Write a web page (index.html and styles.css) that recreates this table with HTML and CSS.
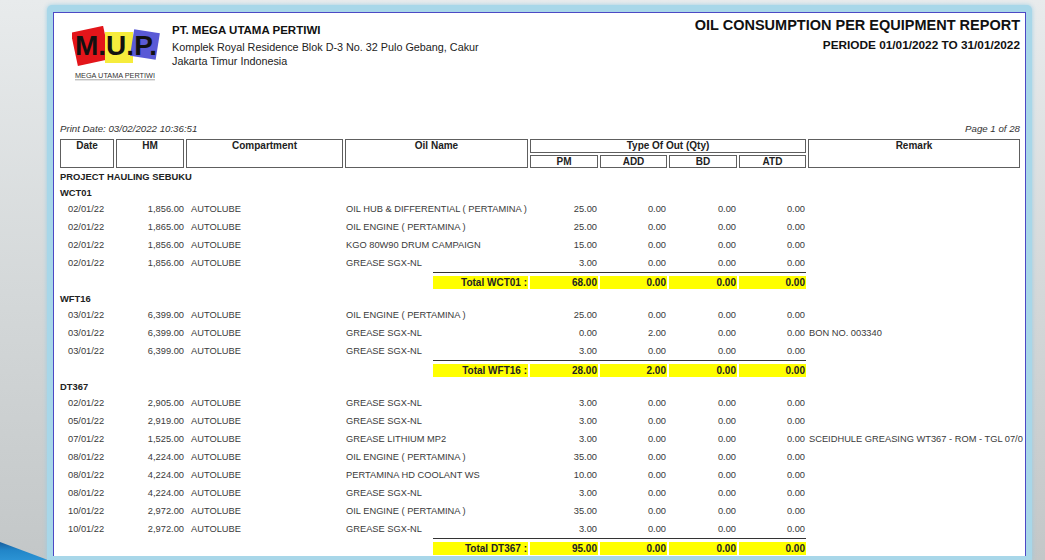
FILE: index.html
```html
<!DOCTYPE html>
<html>
<head>
<meta charset="utf-8">
<title>Oil Consumption Per Equipment Report</title>
<link rel="stylesheet" href="styles.css">
</head>
<body>
<svg class="corner" width="50" height="20" viewBox="0 0 50 20">
  <defs>
    <linearGradient id="cg" x1="0" y1="0" x2="0" y2="1">
      <stop offset="0" stop-color="#1a5f9e"/>
      <stop offset="0.45" stop-color="#2185c8"/>
      <stop offset="1" stop-color="#2b93d4"/>
    </linearGradient>
  </defs>
  <polygon points="0,2 48,20 0,20" fill="url(#cg)"/>
</svg>
<div class="page">
  <div class="frame">
    <div class="sheet">
      <header class="head">
        <div class="logo">
          <svg width="90" height="60" viewBox="0 0 90 60">
            <rect x="2" y="3" width="33" height="34" fill="#e3151a" transform="rotate(-12 18 20)"/>
            <rect x="33" y="6" width="28" height="31" fill="#f6ec3c"/>
            <rect x="60" y="5" width="26" height="27" fill="#5a5ad6" transform="rotate(9 73 18)"/>
            <text x="3" y="29" font-family="Liberation Sans, Arial, sans-serif" font-weight="bold" font-size="27" textLength="82" lengthAdjust="spacingAndGlyphs" fill="#111">M.U.P.</text>
            <text x="3" y="52" font-family="Liberation Sans, Arial, sans-serif" font-size="6.4" textLength="80" lengthAdjust="spacingAndGlyphs" fill="#333">MEGA UTAMA PERTIWI</text>
            <line x1="3" y1="53.8" x2="83" y2="53.8" stroke="#666" stroke-width="0.6"/>
          </svg>
        </div>
        <div class="company">
          <div class="name">PT. MEGA UTAMA PERTIWI</div>
          <div class="addr">Komplek Royal Residence Blok D-3 No. 32 Pulo Gebang, Cakur<br>Jakarta Timur Indonesia</div>
        </div>
        <div class="title-block">
          <div class="title">OIL CONSUMPTION PER EQUIPMENT REPORT</div>
          <div class="period">PERIODE 01/01/2022 TO 31/01/2022</div>
        </div>
      </header>

      <div class="meta">
        <span>Print Date: 03/02/2022 10:36:51</span>
        <span>Page 1 of 28</span>
      </div>

      <div class="thead">
        <div class="th span2">Date</div>
        <div class="th span2">HM</div>
        <div class="th span2">Compartment</div>
        <div class="th span2">Oil Name</div>
        <div class="th type-out">Type Of Out (Qty)</div>
        <div class="th span2 remark-h">Remark</div>
        <div class="th sub">PM</div>
        <div class="th sub">ADD</div>
        <div class="th sub">BD</div>
        <div class="th sub">ATD</div>
      </div>

      <div class="group">PROJECT HAULING SEBUKU</div>

      <div class="group">WCT01</div>
      <div class="row"><span class="c-date">02/01/22</span><span class="c-hm">1,856.00</span><span class="c-comp">AUTOLUBE</span><span class="c-oil">OIL HUB &amp; DIFFERENTIAL ( PERTAMINA )</span><span class="num">25.00</span><span class="num">0.00</span><span class="num">0.00</span><span class="num">0.00</span><span class="c-rem"></span></div>
      <div class="row"><span class="c-date">02/01/22</span><span class="c-hm">1,865.00</span><span class="c-comp">AUTOLUBE</span><span class="c-oil">OIL ENGINE ( PERTAMINA )</span><span class="num">25.00</span><span class="num">0.00</span><span class="num">0.00</span><span class="num">0.00</span><span class="c-rem"></span></div>
      <div class="row"><span class="c-date">02/01/22</span><span class="c-hm">1,856.00</span><span class="c-comp">AUTOLUBE</span><span class="c-oil">KGO 80W90 DRUM CAMPAIGN</span><span class="num">15.00</span><span class="num">0.00</span><span class="num">0.00</span><span class="num">0.00</span><span class="c-rem"></span></div>
      <div class="row"><span class="c-date">02/01/22</span><span class="c-hm">1,856.00</span><span class="c-comp">AUTOLUBE</span><span class="c-oil">GREASE SGX-NL</span><span class="num">3.00</span><span class="num">0.00</span><span class="num">0.00</span><span class="num">0.00</span><span class="c-rem"></span></div>
      <div class="total-row">
        <div class="total-wrap">
          <span class="y">Total WCT01 :</span><span class="y">68.00</span><span class="y">0.00</span><span class="y">0.00</span><span class="y">0.00</span>
        </div>
      </div>

      <div class="group">WFT16</div>
      <div class="row"><span class="c-date">03/01/22</span><span class="c-hm">6,399.00</span><span class="c-comp">AUTOLUBE</span><span class="c-oil">OIL ENGINE ( PERTAMINA )</span><span class="num">25.00</span><span class="num">0.00</span><span class="num">0.00</span><span class="num">0.00</span><span class="c-rem"></span></div>
      <div class="row"><span class="c-date">03/01/22</span><span class="c-hm">6,399.00</span><span class="c-comp">AUTOLUBE</span><span class="c-oil">GREASE SGX-NL</span><span class="num">0.00</span><span class="num">2.00</span><span class="num">0.00</span><span class="num">0.00</span><span class="c-rem">BON NO. 003340</span></div>
      <div class="row"><span class="c-date">03/01/22</span><span class="c-hm">6,399.00</span><span class="c-comp">AUTOLUBE</span><span class="c-oil">GREASE SGX-NL</span><span class="num">3.00</span><span class="num">0.00</span><span class="num">0.00</span><span class="num">0.00</span><span class="c-rem"></span></div>
      <div class="total-row">
        <div class="total-wrap">
          <span class="y">Total WFT16 :</span><span class="y">28.00</span><span class="y">2.00</span><span class="y">0.00</span><span class="y">0.00</span>
        </div>
      </div>

      <div class="group">DT367</div>
      <div class="row"><span class="c-date">02/01/22</span><span class="c-hm">2,905.00</span><span class="c-comp">AUTOLUBE</span><span class="c-oil">GREASE SGX-NL</span><span class="num">3.00</span><span class="num">0.00</span><span class="num">0.00</span><span class="num">0.00</span><span class="c-rem"></span></div>
      <div class="row"><span class="c-date">05/01/22</span><span class="c-hm">2,919.00</span><span class="c-comp">AUTOLUBE</span><span class="c-oil">GREASE SGX-NL</span><span class="num">3.00</span><span class="num">0.00</span><span class="num">0.00</span><span class="num">0.00</span><span class="c-rem"></span></div>
      <div class="row"><span class="c-date">07/01/22</span><span class="c-hm">1,525.00</span><span class="c-comp">AUTOLUBE</span><span class="c-oil">GREASE LITHIUM MP2</span><span class="num">3.00</span><span class="num">0.00</span><span class="num">0.00</span><span class="num">0.00</span><span class="c-rem">SCEIDHULE GREASING WT367 - ROM - TGL 07/0</span></div>
      <div class="row"><span class="c-date">08/01/22</span><span class="c-hm">4,224.00</span><span class="c-comp">AUTOLUBE</span><span class="c-oil">OIL ENGINE ( PERTAMINA )</span><span class="num">35.00</span><span class="num">0.00</span><span class="num">0.00</span><span class="num">0.00</span><span class="c-rem"></span></div>
      <div class="row"><span class="c-date">08/01/22</span><span class="c-hm">4,224.00</span><span class="c-comp">AUTOLUBE</span><span class="c-oil">PERTAMINA HD COOLANT WS</span><span class="num">10.00</span><span class="num">0.00</span><span class="num">0.00</span><span class="num">0.00</span><span class="c-rem"></span></div>
      <div class="row"><span class="c-date">08/01/22</span><span class="c-hm">4,224.00</span><span class="c-comp">AUTOLUBE</span><span class="c-oil">GREASE SGX-NL</span><span class="num">3.00</span><span class="num">0.00</span><span class="num">0.00</span><span class="num">0.00</span><span class="c-rem"></span></div>
      <div class="row"><span class="c-date">10/01/22</span><span class="c-hm">2,972.00</span><span class="c-comp">AUTOLUBE</span><span class="c-oil">OIL ENGINE ( PERTAMINA )</span><span class="num">35.00</span><span class="num">0.00</span><span class="num">0.00</span><span class="num">0.00</span><span class="c-rem"></span></div>
      <div class="row"><span class="c-date">10/01/22</span><span class="c-hm">2,972.00</span><span class="c-comp">AUTOLUBE</span><span class="c-oil">GREASE SGX-NL</span><span class="num">3.00</span><span class="num">0.00</span><span class="num">0.00</span><span class="num">0.00</span><span class="c-rem"></span></div>
      <div class="total-row">
        <div class="total-wrap">
          <span class="y">Total DT367 :</span><span class="y">95.00</span><span class="y">0.00</span><span class="y">0.00</span><span class="y">0.00</span>
        </div>
      </div>
    </div>
  </div>
</div>
</body>
</html>
```

FILE: styles.css
```css
html, body {
  margin: 0;
  height: 560px;
  overflow: hidden;
}

body {
  position: relative;
  background: linear-gradient(180deg, #e8ebec 0%, #d3d7d8 55%, #c3c7c8 100%);
  font-family: "Liberation Sans", Arial, sans-serif;
  color: #333;
}

.corner {
  position: absolute;
  left: 0;
  bottom: 0;
  display: block;
}

.page {
  padding: 5px 0 0 47px;
}

.frame {
  position: relative;
  width: 985px;
  height: 555px;
  box-sizing: border-box;
  padding: 7px 6px 0 6px;
  background: #a8d7e9;
  border-radius: 5px 5px 0 0;
  box-shadow: 0 0 4px rgba(150, 205, 228, 0.9);
}

.sheet {
  height: 544px;
  box-sizing: border-box;
  background: #fff;
  border: 1px solid #4d49c4;
  border-bottom: none;
  padding: 0 5px 0 6px;
  overflow: hidden;
}

/* ---------- report header ---------- */
.head {
  display: flex;
  height: 110px;
}

.logo {
  margin: 13px 0 0 12px;
  width: 90px;
  height: 60px;
}

.logo svg {
  display: block;
}

.company {
  margin: 10px 0 0 10px;
  color: #1a1a1a;
}

.company .name {
  font-weight: bold;
  font-size: 11.5px;
  line-height: 14px;
  color: #111;
}

.company .addr {
  margin-top: 3px;
  font-size: 10.8px;
  line-height: 14px;
  color: #222;
}

.title-block {
  margin-left: auto;
  padding-top: 4px;
  text-align: right;
  color: #111;
}

.title {
  font-weight: bold;
  font-size: 14.5px;
  line-height: 16px;
}

.period {
  margin-top: 5px;
  font-weight: bold;
  font-size: 11.8px;
  line-height: 14px;
}

/* ---------- meta line ---------- */
.meta {
  display: flex;
  justify-content: space-between;
  font-style: italic;
  font-size: 9.7px;
  line-height: 12px;
  margin-bottom: 4px;
  color: #333;
}

/* ---------- table header ---------- */
.thead {
  display: grid;
  grid-template-columns: 54px 68px 157px 183px 68px 67px 68px 67px 212px;
  grid-template-rows: 14px 13px;
  gap: 2px;
}

.th {
  box-sizing: border-box;
  border: 1px solid #5e5e5e;
  font-weight: bold;
  font-size: 10px;
  line-height: 12px;
  text-align: center;
  color: #222;
}

.span2 {
  grid-row: 1 / 3;
}

.type-out {
  grid-column: 5 / 9;
  grid-row: 1;
}

.remark-h {
  grid-column: 9;
}

.sub {
  grid-row: 2;
  line-height: 11px;
}

/* ---------- table body ---------- */
.group {
  box-sizing: border-box;
  height: 16px;
  padding-top: 2px;
  line-height: 14px;
  font-weight: bold;
  font-size: 9.4px;
  color: #222;
}

.row {
  display: grid;
  grid-template-columns: 54px 68px 157px 183px 68px 67px 68px 67px 212px;
  column-gap: 2px;
  height: 18px;
  line-height: 18px;
  font-size: 9.3px;
  white-space: nowrap;
  color: #3a3a3a;
}

.c-date {
  padding-left: 8px;
}

.c-hm {
  text-align: right;
}

.c-comp {
  padding-left: 5px;
}

.c-oil {
  padding-left: 1px;
}

.num {
  text-align: right;
  padding-right: 1px;
}

.c-rem {
  padding-left: 1px;
  overflow: visible;
}

.total-row {
  display: grid;
  grid-template-columns: 54px 68px 157px 183px 68px 67px 68px 67px 212px;
  column-gap: 2px;
  height: 18px;
  align-items: start;
}

.total-wrap {
  grid-column: 4 / 9;
  margin-left: 88px;
  border-top: 1px solid #333;
  padding-top: 3px;
  display: grid;
  grid-template-columns: 95px 68px 67px 68px 67px;
  column-gap: 2px;
}

.y {
  background: #ffff00;
  height: 13px;
  line-height: 13px;
  font-weight: bold;
  font-size: 10px;
  text-align: right;
  padding-right: 1px;
  color: #222;
  white-space: nowrap;
}
```
